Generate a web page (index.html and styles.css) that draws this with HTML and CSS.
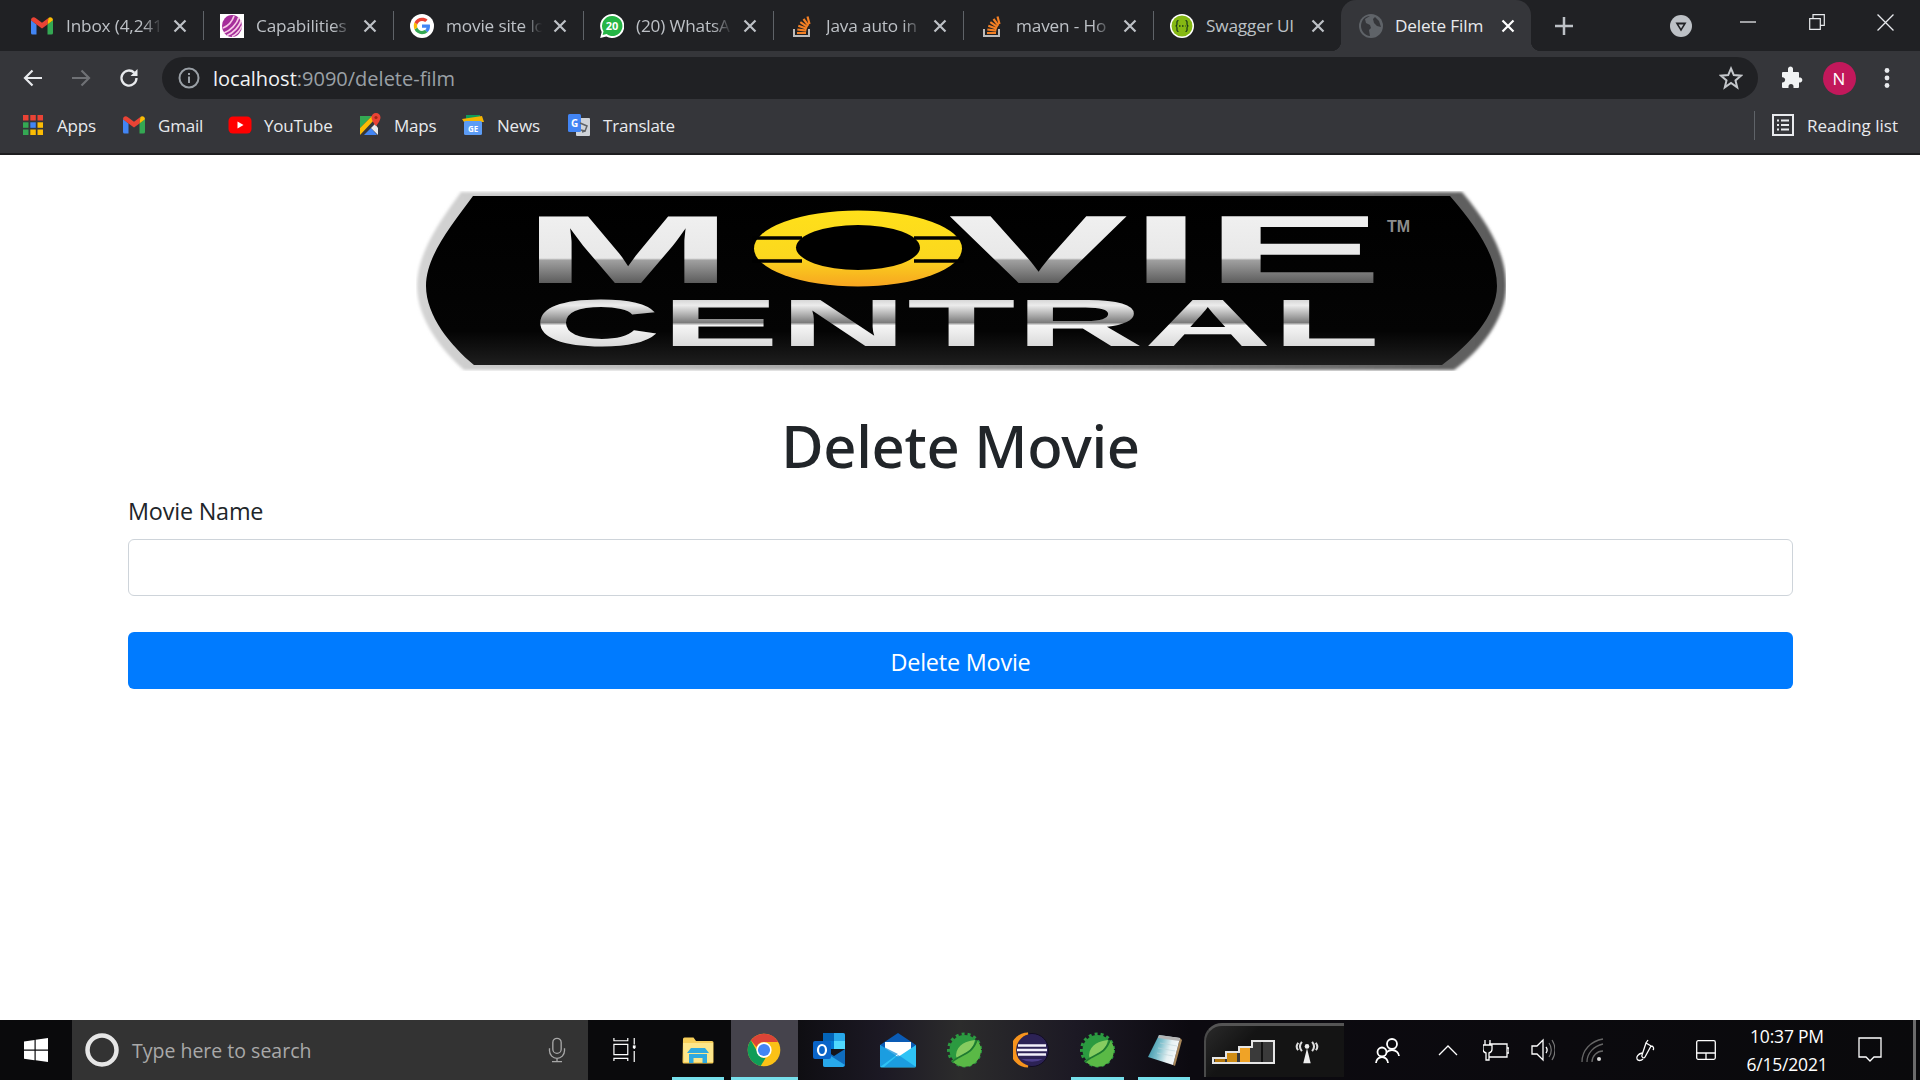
FILE: index.html
```html
<!DOCTYPE html>
<html lang="en">
<head>
<meta charset="utf-8">
<title>Delete Film</title>
<link rel="stylesheet" href="styles.css">
</head>
<body>
<svg class="defs" width="0" height="0" aria-hidden="true">
  <defs>
    <linearGradient id="padGrad" x1="0" y1="0" x2="1" y2="0.3">
      <stop offset="0" stop-color="#1f8299"/><stop offset=".45" stop-color="#7fc0cd"/><stop offset=".75" stop-color="#e6f1f3"/><stop offset="1" stop-color="#f6f9fa"/>
    </linearGradient>
    <symbol id="gmail" viewBox="0 0 24 24">
      <path fill="#4285F4" d="M1 6v13a1.600 1.600 0 0 0 1.600 1.600H6.500V10.500z"/>
      <path fill="#34A853" d="M23 6v13a1.600 1.600 0 0 1-1.600 1.600h-3.900V10.500z"/>
      <path fill="#EA4335" d="M1 6.200C1 3.800 3.700 2.500 5.600 4L12 8.800 18.400 4l-.9 6.500L12 14.600l-5.500-4.100L1 6.200z"/>
      <path fill="#FBBC04" d="M18.400 4C20.300 2.500 23 3.800 23 6.200l-5.500 4.300z"/>
    </symbol>
    <symbol id="capab" viewBox="0 0 24 24">
      <rect width="24" height="24" fill="#fff"/>
      <ellipse cx="12" cy="12" rx="10" ry="11" fill="#a52d9b"/>
      <path d="M4 19C10 17 17 10 19 3M7 21.500C13 19 20 12 21 6M3 14C8 12 12 8 14 2M12 22.500c4-2 8-6 10-11" stroke="#f7c9e6" stroke-width="1.700" fill="none"/>
    </symbol>
    <symbol id="google" viewBox="0 0 24 24">
      <circle cx="12" cy="12" r="12" fill="#fff"/>
      <path fill="#4285F4" d="M20 12.200c0-.6 0-1.100-.2-1.700H12v3.200h4.500c-.2 1-.8 1.900-1.700 2.500l2.700 2.100c1.600-1.500 2.500-3.600 2.500-6.100z"/>
      <path fill="#34A853" d="M12 20.200c2.200 0 4.100-.7 5.500-2l-2.700-2.100c-.7.5-1.700.8-2.800.8-2.200 0-4-1.500-4.700-3.400l-2.800 2.100c1.400 2.800 4.200 4.600 7.500 4.600z"/>
      <path fill="#FBBC04" d="M7.300 13.500c-.3-1-.3-2 0-3L4.500 8.300c-1 2.200-1 5 0 7.300z"/>
      <path fill="#EA4335" d="M12 6.900c1.200 0 2.300.4 3.200 1.200l2.400-2.400C16.100 4.400 14.200 3.800 12 3.800c-3.300 0-6.100 1.800-7.500 4.500l2.800 2.200C8 8.400 9.800 6.900 12 6.900z"/>
    </symbol>
    <symbol id="whatsapp" viewBox="0 0 24 24">
      <path fill="#fff" d="M12 0a12 12 0 0 0-10.300 18L.2 24l6.100-1.600A12 12 0 1 0 12 0z"/>
      <path fill="#25B545" d="M12 2a10 10 0 0 0-8.500 15.200l-.9 3.900 4-1A10 10 0 1 0 12 2z"/>
      <text x="12" y="16" class="wa-count">20</text>
    </symbol>
    <symbol id="so" viewBox="0 0 24 24">
      <path fill="none" stroke="#bcbbbb" stroke-width="2" d="M4 15v7h15v-7"/>
      <path stroke="#f48024" stroke-width="2.200" fill="none" d="M7 19h9M7.300 15.500l9 1.200M8.300 11.800l8.500 3M10.300 8.200l7.300 5M13.500 5l5 6.700M17.500 2.500l2 7.500"/>
    </symbol>
    <symbol id="swagger" viewBox="0 0 24 24">
      <circle cx="12" cy="12" r="12" fill="#fff"/>
      <circle cx="12" cy="12" r="10.500" fill="#85b813"/>
      <path fill="none" stroke="#17361a" stroke-width="1.200" d="M8.500 6.500c-2 0-1.500 2-1.500 3.500s-1 2-1.500 2c.5 0 1.500.5 1.500 2s-.5 3.500 1.500 3.500M15.500 6.500c2 0 1.500 2 1.500 3.500s1 2 1.500 2c-.5 0-1.500.5-1.500 2s.5 3.500-1.500 3.500"/>
      <path stroke="#17361a" stroke-width="1.600" stroke-dasharray="1.500 1.500" d="M9 12h6.500"/>
    </symbol>
    <symbol id="globe" viewBox="0 0 24 24">
      <circle cx="12" cy="12" r="12" fill="#5f6368"/>
      <path fill="#35363a" d="M11 2 6 5l1 4 4 2 1 3-2 2 1 6c-5-.5-9-5-9-10S5 2.500 11 2zM16 3l4 4 2 6-4-1-3-3-1-4z"/>
    </symbol>
    <symbol id="x" viewBox="0 0 14 14">
      <path d="M1.500 1.500l11 11M12.500 1.500l-11 11" stroke="currentColor" stroke-width="2.200" fill="none"/>
    </symbol>
    <symbol id="apps" viewBox="0 0 24 24">
      <g>
        <rect x="2" y="2" width="5.500" height="5.500" fill="#ea4335"/><rect x="9.300" y="2" width="5.500" height="5.500" fill="#ea4335"/><rect x="16.500" y="2" width="5.500" height="5.500" fill="#ea4335"/>
        <rect x="2" y="9.300" width="5.500" height="5.500" fill="#34a853"/><rect x="9.300" y="9.300" width="5.500" height="5.500" fill="#4285f4"/><rect x="16.500" y="9.300" width="5.500" height="5.500" fill="#fbbc04"/>
        <rect x="2" y="16.500" width="5.500" height="5.500" fill="#34a853"/><rect x="9.300" y="16.500" width="5.500" height="5.500" fill="#fbbc04"/><rect x="16.500" y="16.500" width="5.500" height="5.500" fill="#fbbc04"/>
      </g>
    </symbol>
    <symbol id="youtube" viewBox="0 0 24 24">
      <rect x="0.500" y="3.500" width="23" height="17" rx="4.500" fill="#f00"/>
      <path fill="#fff" d="M9.500 8.500v7l6-3.500z"/>
    </symbol>
    <symbol id="maps" viewBox="0 0 24 24">
      <path fill="#34a853" d="M2 3h12l-12 12z"/>
      <path fill="#fbbc04" d="M2 15 14 3l3 3L2 22z"/>
      <path fill="#4285f4" d="M6 22l7-7 6 7z"/>
      <path fill="#e8eaed" d="M13 15l4-4 3 4v7z"/>
      <path fill="#ea4335" d="M18 0a4.500 4.500 0 0 0-4.500 4.500C13.500 8 18 13 18 13s4.500-5 4.500-8.500A4.500 4.500 0 0 0 18 0z"/>
      <circle cx="18" cy="4.500" r="1.600" fill="#a52714"/>
    </symbol>
    <symbol id="news" viewBox="0 0 24 24">
      <path fill="#0f9d58" d="M5 2h14v6H5z"/>
      <path fill="#f4b400" d="M1 6l20-3 2 6H3z"/>
      <rect x="3" y="8" width="18" height="14" rx="1.500" fill="#5c9cf5"/>
      <text x="12" y="18.500" class="news-mark">GE</text>
    </symbol>
    <symbol id="translate" viewBox="0 0 24 24">
      <rect x="9" y="5" width="14" height="18" rx="1" fill="#cfd3d8"/>
      <rect x="1" y="1" width="13" height="18" rx="1.500" fill="#4285f4"/>
      <text x="7.500" y="14" class="tr-mark">G</text>
      <path d="M13 10l7 3-2 5-4-1M15 19l3-1" stroke="#5f6368" stroke-width="1.500" fill="none"/>
    </symbol>
    <symbol id="chrome" viewBox="0 0 24 24">
      <circle cx="12" cy="12" r="11.500" fill="#fbc116"/>
      <path fill="#db4437" d="M12 .5a11.500 11.500 0 0 1 10 5.800H12a5.700 5.700 0 0 0-5.300 3.500L2.700 5.200A11.500 11.500 0 0 1 12 .5z"/>
      <path fill="#0f9d58" d="M2.700 5.200l4.300 7.500a5.700 5.700 0 0 0 6.100 4.900l-3.400 5.700A11.500 11.500 0 0 1 2.700 5.200z"/>
      <circle cx="12" cy="12" r="5.400" fill="#fff"/>
      <circle cx="12" cy="12" r="4.300" fill="#4285f4"/>
    </symbol>
    <symbol id="spring" viewBox="0 0 36 36">
      <circle cx="18.500" cy="18" r="15" fill="#2b9a40"/>
      <circle cx="18.500" cy="18" r="16" fill="none" stroke="#2b9a40" stroke-width="3" stroke-dasharray="3 3"/>
      <path fill="#5ab946" d="M31 8A17 17 0 0 1 35 18 16.500 16.500 0 0 1 6 29C13 23 22 23 26 18 29 15 30 11 31 8z"/>
      <path fill="#86cc60" d="M29 8C21 9 11 12 10 23c0 2 1 4 2 4 7-7 14-6 17-19z"/>
      <path fill="none" stroke="#1f7a30" stroke-width="1.600" d="M6 30C14 22 26 23 31 8"/>
    </symbol>
  </defs>
</svg>

<header class="chrome">
  <div class="tabstrip">
    <div class="tab"><svg class="fav"><use href="#gmail"/></svg><span class="tab-title">Inbox (4,241</span><svg class="tab-x"><use href="#x"/></svg></div><i class="tab-sep"></i>
    <div class="tab"><svg class="fav"><use href="#capab"/></svg><span class="tab-title">Capabilities</span><svg class="tab-x"><use href="#x"/></svg></div><i class="tab-sep"></i>
    <div class="tab"><svg class="fav"><use href="#google"/></svg><span class="tab-title">movie site lo</span><svg class="tab-x"><use href="#x"/></svg></div><i class="tab-sep"></i>
    <div class="tab"><svg class="fav"><use href="#whatsapp"/></svg><span class="tab-title">(20) WhatsA</span><svg class="tab-x"><use href="#x"/></svg></div><i class="tab-sep"></i>
    <div class="tab"><svg class="fav"><use href="#so"/></svg><span class="tab-title">Java auto in</span><svg class="tab-x"><use href="#x"/></svg></div><i class="tab-sep"></i>
    <div class="tab"><svg class="fav"><use href="#so"/></svg><span class="tab-title">maven - Ho</span><svg class="tab-x"><use href="#x"/></svg></div><i class="tab-sep"></i>
    <div class="tab tab-last"><svg class="fav"><use href="#swagger"/></svg><span class="tab-title tab-nofade">Swagger UI</span><svg class="tab-x"><use href="#x"/></svg></div>
    <div class="tab tab-active"><svg class="fav"><use href="#globe"/></svg><span class="tab-title tab-nofade">Delete Film</span><svg class="tab-x"><use href="#x"/></svg></div>
    <svg class="newtab" viewBox="0 0 20 20"><path d="M10 1v18M1 10h18" stroke="#bdc1c6" stroke-width="2.500"/></svg>
    <svg class="tabsearch" viewBox="0 0 22 22"><circle cx="11" cy="11" r="11" fill="#bdc1c6"/><path d="M5.500 7.500h11L11 16.500z" fill="#202124"/><path d="M8.500 9.500h5L11 13.500z" fill="#bdc1c6"/></svg>
    <div class="winbtns">
      <div class="winbtn"><svg viewBox="0 0 16 16" width="16" height="16"><path d="M0 8h16" stroke="#e8eaed" stroke-width="1.300"/></svg></div>
      <div class="winbtn"><svg viewBox="0 0 16 16" width="16" height="18"><path d="M.7 4.700h10.600v10.600H.7zM4 4.700V.7h11.300v10.600h-4" fill="none" stroke="#e8eaed" stroke-width="1.200"/></svg></div>
      <div class="winbtn"><svg viewBox="0 0 16 16" width="17" height="17"><path d="M.5.500l15 15M15.500.500l-15 15" stroke="#e8eaed" stroke-width="1.200"/></svg></div>
    </div>
  </div>

  <div class="toolbar">
    <div class="tool"><svg viewBox="0 0 24 24" width="24" height="24"><path d="M21 12H4M11.500 4.500 4 12l7.500 7.500" fill="none" stroke="#e8eaed" stroke-width="2.200"/></svg></div>
    <div class="tool"><svg viewBox="0 0 24 24" width="24" height="24"><path d="M3 12h17M12.500 4.500 20 12l-7.500 7.500" fill="none" stroke="#6f7175" stroke-width="2.200"/></svg></div>
    <div class="tool"><svg viewBox="0 0 24 24" width="24" height="24"><path d="M19.500 12a7.500 7.500 0 1 1-2.300-5.400" fill="none" stroke="#e8eaed" stroke-width="2.300"/><path d="M20.500 3v7h-7z" fill="#e8eaed"/></svg></div>
    <div class="omnibox">
      <svg class="info" viewBox="0 0 24 24" width="24" height="24"><circle cx="12" cy="12" r="9.500" fill="none" stroke="#9aa0a6" stroke-width="2"/><path d="M12 10.500V17M12 7v2" stroke="#9aa0a6" stroke-width="2"/></svg>
      <div class="url"><span class="url-host">localhost</span>:9090/delete-film</div>
      <svg class="star" viewBox="0 0 24 24" width="24" height="24"><path d="M12 2.500l2.800 6.600 7.200.6-5.500 4.700 1.700 7L12 17l-6.200 4.400 1.700-7L2 9.700l7.200-.6z" fill="none" stroke="#c4c7cb" stroke-width="2"/></svg>
    </div>
    <div class="tool tool-first"><svg viewBox="0 0 24 24" width="24" height="24"><path fill="#f1f3f4" d="M9 2.500a2.600 2.600 0 0 1 5 0V6h5a1 1 0 0 1 1 1v4.500h1.500a2.600 2.600 0 0 1 0 5H20V21a1 1 0 0 1-1 1h-4.500v-1.500a2.500 2.500 0 0 0-5 0V22H4a1 1 0 0 1-1-1v-4.500h1a2.700 2.700 0 0 0 0-5.300H3V7a1 1 0 0 1 1-1h5z"/></svg></div>
    <div class="tool"><span class="avatar">N</span></div>
    <div class="tool"><svg viewBox="0 0 24 24" width="24" height="24"><circle cx="12" cy="4.500" r="2.400" fill="#e8eaed"/><circle cx="12" cy="12" r="2.400" fill="#e8eaed"/><circle cx="12" cy="19.500" r="2.400" fill="#e8eaed"/></svg></div>
  </div>

  <nav class="bookmarks">
    <div class="bm-list">
      <a class="bm"><svg class="fav"><use href="#apps"/></svg>Apps</a>
      <a class="bm"><svg class="fav"><use href="#gmail"/></svg>Gmail</a>
      <a class="bm"><svg class="fav"><use href="#youtube"/></svg>YouTube</a>
      <a class="bm"><svg class="fav"><use href="#maps"/></svg>Maps</a>
      <a class="bm"><svg class="fav"><use href="#news"/></svg>News</a>
      <a class="bm"><svg class="fav"><use href="#translate"/></svg>Translate</a>
    </div>
    <div class="reading">
      <i class="reading-sep"></i>
      <svg class="fav" viewBox="0 0 24 24"><rect x="2" y="2" width="20" height="20" fill="none" stroke="#e8eaed" stroke-width="2"/><path d="M6 7.500h2M6 12h2M6 16.500h2M10 7.500h8M10 12h8M10 16.500h8" stroke="#e8eaed" stroke-width="2"/></svg>
      <span>Reading list</span>
    </div>
  </nav>
</header>

<main class="page">
  <svg class="logo" viewBox="0 0 1090 180" width="1090" height="180" role="img" aria-label="Movie Central">
    <defs>
      <linearGradient id="lgMovie" gradientUnits="userSpaceOnUse" x1="0" y1="23" x2="0" y2="92">
        <stop offset="0" stop-color="#f0f0f0"/><stop offset=".64" stop-color="#e8e8e8"/><stop offset=".67" stop-color="#a0a0a0"/><stop offset="1" stop-color="#5c5c5c"/>
      </linearGradient>
      <linearGradient id="lgCentral" gradientUnits="userSpaceOnUse" x1="0" y1="107" x2="0" y2="156">
        <stop offset="0" stop-color="#cfcfcf"/><stop offset=".15" stop-color="#ececec"/><stop offset=".5" stop-color="#7c7c7c"/><stop offset=".56" stop-color="#f6f6f6"/><stop offset="1" stop-color="#d8d8d8"/>
      </linearGradient>
      <linearGradient id="lgRing" x1="0" y1="0" x2="0" y2="1">
        <stop offset="0" stop-color="#ffe01a"/><stop offset=".6" stop-color="#fbd81e"/><stop offset="1" stop-color="#f7a520"/>
      </linearGradient>
      <linearGradient id="lgEdge" x1="0" y1="0" x2="1" y2="0">
        <stop offset="0" stop-color="#d4d4d4"/><stop offset=".6" stop-color="#8a8a8a"/><stop offset="1" stop-color="#5a5a5a"/>
      </linearGradient>
      <linearGradient id="lgPlate" x1="0" y1="0" x2="0" y2="1">
        <stop offset="0" stop-color="#000"/><stop offset=".8" stop-color="#040404"/><stop offset="1" stop-color="#1e1e1e"/>
      </linearGradient>
      <filter id="soft" x="-2%" y="-5%" width="104%" height="110%"><feGaussianBlur stdDeviation="1.500"/></filter>
    </defs>
    <path d="M45 1H1046C1072 32 1090 62 1090 95C1090 128 1064 160 1038 179H48C26 160 1 128 1 95C1 62 24 30 45 1Z" fill="url(#lgEdge)" filter="url(#soft)"/>
    <path d="M57 5H1034C1060 35 1081 65 1081 95C1081 125 1052 155 1026 174H58C35 155 10 125 10 95C10 65 35 35 57 5Z" fill="url(#lgPlate)"/>
    <text class="logo-a" x="106" y="92" textLength="212" lengthAdjust="spacingAndGlyphs" fill="url(#lgMovie)">M</text>
    <text class="logo-a" x="532" y="92" textLength="436" lengthAdjust="spacingAndGlyphs" fill="url(#lgMovie)">VIE</text>
    <ellipse cx="442" cy="57.500" rx="104" ry="38" fill="url(#lgRing)"/>
    <ellipse cx="442" cy="56.500" rx="62" ry="22.500" fill="#000"/>
    <path d="M336 47h50M498 47h50M336 70h50M498 70h50" stroke="#000" stroke-width="3.500"/>
    <text class="logo-tm" x="971" y="41" fill="#8c8c8c">TM</text>
    <text class="logo-b" x="117" y="155" textLength="847" lengthAdjust="spacingAndGlyphs" fill="url(#lgCentral)">CENTRAL</text>
  </svg>
  <h1 class="title">Delete Movie</h1>
  <form class="form">
    <label class="label" for="movie">Movie Name</label>
    <input class="input" id="movie" type="text">
    <button class="btn" type="button">Delete Movie</button>
  </form>
</main>

<footer class="taskbar">
  <div class="start"><svg viewBox="0 0 24 24" width="24" height="24"><path fill="#fff" d="M0 3.500 10.500 2v9.500H0zM11.700 1.800 24 0v11.500H11.700zM0 12.700h10.500v9.500L0 20.700zM11.700 12.700H24V24l-12.300-1.800z"/></svg></div>
  <div class="search">
    <svg viewBox="0 0 36 36" width="36" height="36"><circle cx="18" cy="18" r="14.500" fill="none" stroke="#e6e6e6" stroke-width="4.500"/></svg>
    <span class="search-text">Type here to search</span>
    <svg class="mic" viewBox="0 0 24 30" width="20" height="26"><rect x="7" y="1" width="10" height="18" rx="5" fill="none" stroke="#a8a8a8" stroke-width="1.600"/><path d="M3 13v3a9 9 0 0 0 18 0v-3M12 25v4M6 29h12" fill="none" stroke="#a8a8a8" stroke-width="1.600"/></svg>
  </div>
  <div class="tb tb-view"><svg viewBox="0 0 26 26" width="24" height="26"><path d="M1 0v3h15V0M1 7h15v11H1zM1 25v-3h15v3M23 0v7M23 10.500v1.500M23 14v12" fill="none" stroke="#fff" stroke-width="1.300"/><rect x="21.500" y="8" width="3" height="3" fill="#fff"/></svg></div>
  <div class="tb tb-run tb-gap">
    <svg viewBox="0 0 32 32" width="32" height="32"><path fill="#f7cf5a" d="M1 5a1.500 1.500 0 0 1 1.500-1.500h9L14 7h16a1.500 1.500 0 0 1 1.500 1.500V28a1.500 1.500 0 0 1-1.500 1.500H2A1.500 1.500 0 0 1 .5 28z"/><path fill="#fde68a" d="M1 9h30v19H2z"/><path fill="#2fa9df" d="M7 20h18v9h-4.500v-5h-9v5H7zM5 19l4-5h14l4 5z"/></svg>
  </div>
  <div class="tb tb-active"><svg width="34" height="34"><use href="#chrome"/></svg></div>
  <div class="tb">
    <svg viewBox="0 0 36 36" width="36" height="36"><path fill="#0364b8" d="M10 1h20a2 2 0 0 1 2 2v13H10z"/><path fill="#28a8ea" d="M21 1h9a2 2 0 0 1 2 2v7H21z"/><path fill="#0078d4" d="M10 9h11v8H10z"/><path fill="#50d9ff" d="M21 9h11v8H21z"/><path fill="#0f6cbd" d="M10 17l11 7 11-7v16a2 2 0 0 1-2 2H12a2 2 0 0 1-2-2z"/><path fill="#28a8ea" d="M10 19l22 14-2 2H12a2 2 0 0 1-2-2z"/><rect x="0" y="9" width="18" height="18" rx="2" fill="#0a64c8"/><ellipse cx="9" cy="18" rx="4" ry="5" fill="none" stroke="#fff" stroke-width="2.200"/></svg>
  </div>
  <div class="tb">
    <svg viewBox="0 0 36 36" width="36" height="36"><path fill="#0a5bb5" d="M18 1 0 13v5h36v-5z"/><path fill="#fff" d="M5 10h26v9L18 26 5 19z"/><path fill="#2ec3f5" d="M0 13l18 12 18-12v21a1.500 1.500 0 0 1-1.500 1.500h-33A1.500 1.500 0 0 1 0 34z"/><path fill="#1590d8" d="M0 35 18 22 0 13zM36 35H4l14-12 2 1z" opacity=".75"/></svg>
  </div>
  <div class="tb"><svg width="36" height="36" viewBox="0 0 36 36"><use href="#spring"/></svg></div>
  <div class="tb">
    <svg viewBox="0 0 36 36" width="36" height="36"><circle cx="19" cy="18" r="16.500" fill="#2c2255" stroke="#120d22" stroke-width="1"/><path d="M15 1.500a16.500 16.500 0 0 0 0 33A17 17 0 0 1 15 1.500z" fill="#f7941e" stroke="#f7941e" stroke-width="2"/><path d="M5 13.500h28M4 18h30M5 22.500h28" stroke="#f2f0fa" stroke-width="2.400"/><path d="M8 27a16 10 0 0 0 22 0z" fill="#4d3f8a"/></svg>
  </div>
  <div class="tb tb-run"><svg width="36" height="36" viewBox="0 0 36 36"><use href="#spring"/></svg></div>
  <div class="tb tb-run">
    <svg viewBox="0 0 36 36" width="36" height="36"><path fill="#a8875a" d="M34 6l2 2-7 26-2-1z"/><path fill="url(#padGrad)" d="M13 3l21 3-7 27L2 25z"/><path fill="#b5b5b5" d="M13 3l21 3-.8 3L12 6z"/><path d="M14 11l17 3M12 16l17 3M11 21l16 3" stroke="#bcd3d9" stroke-width="1" fill="none" opacity=".6"/></svg>
  </div>
  <div class="thumb">
    <svg viewBox="0 0 64 24" width="64" height="24"><path d="M1 18h13v-6h13V7h13V1h22v22H1z" fill="#3a3a3a" stroke="#e6e6e6" stroke-width="2"/><path fill="#b5790f" d="M3 19h10v3H3z"/><path fill="#d08d15" d="M15 13h10v9H15z"/><path fill="#f0a326" d="M28 8h10v14H28z"/><path stroke="#111" stroke-width="2" d="M50 2v20"/></svg>
    <svg viewBox="0 0 28 28" width="26" height="26"><path d="M14 10l-4 16h8z" fill="#eee"/><circle cx="14" cy="8" r="2.500" fill="#eee"/><path d="M8.500 3C6 6 6 10 8.500 13M19.500 3c2.500 3 2.500 7 0 10M4.500 4c-2 3-2 6 0 8M23.500 4c2 3 2 6 0 8" fill="none" stroke="#ddd" stroke-width="2.200"/></svg>
  </div>
  <div class="tray">
    <div class="ti"><svg viewBox="0 0 28 28" width="28" height="28"><circle cx="18" cy="8" r="5" fill="none" stroke="#fff" stroke-width="1.800"/><path d="M11 20c0-3 3-6 7-6s7 3 7 6" fill="none" stroke="#fff" stroke-width="1.800"/><circle cx="8" cy="16" r="4.500" fill="#0b0b0d" stroke="#fff" stroke-width="1.800"/><path d="M2 27c0-3 2.500-6 6-6s6 3 6 6" fill="#0b0b0d" stroke="#fff" stroke-width="1.800"/></svg></div>
    <div class="ti"><svg viewBox="0 0 20 12" width="20" height="12"><path d="M1 11 10 2l9 9" fill="none" stroke="#fff" stroke-width="1.300"/></svg></div>
    <div class="ti"><svg viewBox="0 0 26 22" width="26" height="22"><path d="M6 5h18v13H6M24 9h2v5h-2" fill="none" stroke="#fff" stroke-width="1.300"/><path d="M2 1v5M7 1v5M0 6h9v4a4 4 0 0 1-3 4v7H3v-7a4 4 0 0 1-3-4z" fill="#0b0b0d" stroke="#fff" stroke-width="1.300"/></svg></div>
    <div class="ti"><svg viewBox="0 0 24 24" width="24" height="24"><path d="M1 8h5l6-6v20l-6-6H1z" fill="none" stroke="#fff" stroke-width="1.300"/><path d="M15 9a5 5 0 0 1 0 6" fill="none" stroke="#fff" stroke-width="1.300"/><path d="M18 5c3 4 3 10 0 14M21 2c4 6 4 14 0 20" fill="none" stroke="#777" stroke-width="1.200"/></svg></div>
    <div class="ti"><svg viewBox="0 0 24 24" width="24" height="24"><path d="M1 24C1 12 10 3 22 1M6 24C6 15 13 8 22 6M11 24c0-6 5-11 11-11" fill="none" stroke="#666" stroke-width="1.300"/><circle cx="18" cy="21" r="2" fill="#ddd"/></svg></div>
    <div class="ti"><svg viewBox="0 0 24 24" width="24" height="24"><path d="M13 5l5 3-6 11c-1 2-4 0-3-2zM15 2l-2 3M18 8c3 0 3 3 2 4M9 15c-4 1-6 4-5 6s4 2 6 0" fill="none" stroke="#fff" stroke-width="1.300"/></svg></div>
    <div class="ti"><svg viewBox="0 0 20 20" width="20" height="20"><rect x=".7" y=".7" width="18.600" height="18.600" rx="1.500" fill="none" stroke="#fff" stroke-width="1.300"/><path d="M.7 13h18.600M10 13v6" stroke="#fff" stroke-width="1.300"/></svg></div>
    <div class="clock"><div>10:37 PM</div><div>6/15/2021</div></div>
    <div class="ti"><svg viewBox="0 0 24 26" width="24" height="26"><path d="M1 1h22v19h-7l-4 4-4-4H1z" fill="none" stroke="#fff" stroke-width="1.300"/></svg></div>
  </div>
  <i class="peek"></i>
</footer>
</body>
</html>
```
FILE: styles.css
```css
* { box-sizing: border-box; }
html, body { margin: 0; height: 100%; }
body {
  width: 1920px;
  height: 1080px;
  overflow: hidden;
  display: flex;
  flex-direction: column;
  background: #fff;
  font-family: "Open Sans", "Noto Sans", sans-serif;
  color: #212529;
}
.defs { position: absolute; }
.wa-count { font: 700 11px "Open Sans", sans-serif; fill: #fff; text-anchor: middle; }
.news-mark { font: 700 8px "Open Sans", sans-serif; fill: #fff; text-anchor: middle; }
.tr-mark { font: 700 10px "Open Sans", sans-serif; fill: #fff; text-anchor: middle; }

/* browser frame */
.chrome { flex: none; background: #35363a; color: #e8eaed; }
.tabstrip {
  height: 51px;
  background: #202124;
  display: flex;
  align-items: center;
  padding-left: 14px;
}
.tab {
  flex: none;
  width: 188.5px;
  height: 51px;
  display: flex;
  align-items: center;
  padding: 0 14px 0 16px;
  color: #bdc1c6;
  font-size: 17.2px;
  letter-spacing: -0.15px;
}
.tab-last { width: 187px; }
.tab-active {
  position: relative;
  width: 190px;
  padding-left: 18px;
  padding-right: 14px;
  background: #35363a;
  border-radius: 15px 15px 0 0;
  color: #e8eaed;
}
.tab-active::before, .tab-active::after {
  content: "";
  position: absolute;
  bottom: 0;
  width: 10px;
  height: 10px;
}
.tab-active::before { left: -10px; background: radial-gradient(circle at 0 0, #202124 10px, #35363a 10.5px); }
.tab-active::after { right: -10px; background: radial-gradient(circle at 100% 0, #202124 10px, #35363a 10.5px); }
.fav { flex: none; width: 24px; height: 24px; }
.tab-title {
  flex: 1;
  min-width: 0;
  margin-left: 12px;
  white-space: nowrap;
  -webkit-mask-image: linear-gradient(90deg, #000 72%, transparent 90%);
  mask-image: linear-gradient(90deg, #000 72%, transparent 90%);
}
.tab-nofade { -webkit-mask-image: none; mask-image: none; }
.tab-x { flex: none; width: 14px; height: 14px; margin-right: 2px; color: #bdc1c6; }
.tab-active .tab-x { color: #fff; }
.tab-sep { flex: none; width: 1.5px; height: 29px; background: #5f6368; }
.newtab { flex: none; width: 20px; height: 20px; margin-left: 23px; }
.tabsearch { flex: none; width: 22px; height: 22px; margin-left: auto; margin-right: 21px; }
.winbtns { flex: none; display: flex; align-self: flex-start; }
.winbtn { width: 69px; height: 44px; display: flex; align-items: center; justify-content: center; }

.toolbar {
  height: 54px;
  padding: 6px 9px;
  display: flex;
  align-items: center;
}
.tool { flex: none; width: 48px; height: 42px; display: flex; align-items: center; justify-content: center; }
.tool-first { margin-left: 9px; }
.omnibox {
  flex: 1;
  height: 42px;
  margin-left: 9px;
  padding: 0 15px;
  border-radius: 21px;
  background: #202124;
  display: flex;
  align-items: center;
}
.url { flex: 1; margin-left: 12px; font-size: 20px; letter-spacing: 0; color: #9aa0a6; }
.url-host { color: #f1f3f4; }
.avatar {
  width: 33px;
  height: 33px;
  border-radius: 50%;
  background: #c2185b;
  color: #fff;
  font-size: 17px;
  display: flex;
  align-items: center;
  justify-content: center;
}

.bookmarks {
  height: 50px;
  border-bottom: 2px solid #1d1d1f;
  padding: 0 0 8px 21px;
  display: flex;
  align-items: center;
  font-size: 17px;
  letter-spacing: -0.2px;
}
.bm-list { display: grid; grid-template-columns: 101px 106px 130px 103px 106px auto; }
.bm { display: flex; align-items: center; gap: 12px; color: #e8eaed; white-space: nowrap; }
.reading { margin-left: auto; display: flex; align-items: center; padding-right: 22px; color: #e8eaed; letter-spacing: 0; }
.reading-sep { width: 1.5px; height: 29px; background: #5f6368; margin-right: 16px; }
.reading span { margin-left: 12px; }

/* page */
.page {
  flex: 1;
  min-height: 0;
  padding: 36px 127px 0 128px;
  display: flex;
  flex-direction: column;
  align-items: stretch;
}
.logo { flex: none; display: block; align-self: center; }
.logo-a { font: 700 97px "Liberation Sans", sans-serif; }
.logo-b { font: 700 66px "Liberation Sans", sans-serif; }
.logo-tm { font: 700 16px "Liberation Sans", sans-serif; }
.title {
  margin: 39px 0 0;
  text-align: center;
  font-family: "Noto Sans", "Open Sans", sans-serif;
  font-size: 58px;
  line-height: 72px;
  font-weight: 500;
  letter-spacing: -0.3px;
  color: #212529;
}
.form { display: flex; flex-direction: column; }
.label { margin-top: 11px; font-size: 23.4px; line-height: 36px; letter-spacing: -0.2px; color: #212529; }
.input {
  margin-top: 10px;
  height: 57px;
  border: 1.5px solid #ced4da;
  border-radius: 6px;
  background: #fff;
}
.btn {
  margin-top: 36px;
  height: 57px;
  padding-top: 3px;
  border: 0;
  border-radius: 6px;
  background: #007bff;
  color: #fff;
  font-family: inherit;
  font-size: 23.4px;
  letter-spacing: -0.2px;
}

/* taskbar */
.taskbar {
  flex: none;
  height: 60px;
  display: flex;
  align-items: stretch;
  background: linear-gradient(90deg, #0a0a0c 0, #0a0a0c 40%, #1c1924 46%, #2c2c2c 50%, #1c1924 56%, #0c0a10 62%, #0a0a0c 100%);
  color: #fff;
}
.start { flex: none; width: 72px; display: flex; align-items: center; justify-content: center; background: #0a0a0c; }
.search {
  flex: none;
  width: 516px;
  background: #333;
  padding: 0 21px 0 12px;
  display: flex;
  align-items: center;
}
.search-text { flex: 1; margin-left: 12px; font-size: 19.5px; color: #a9a9a9; }
.mic { flex: none; }
.tb {
  flex: none;
  width: 66.6px;
  display: flex;
  align-items: center;
  justify-content: center;
  position: relative;
}
.tb-view { margin-left: 4px; }
.tb-gap { margin-left: 6px; }
.tb-run::after {
  content: "";
  position: absolute;
  left: 7px;
  right: 7px;
  bottom: 0;
  height: 3px;
  background: #76dfeb;
}
.tb-active { background: #45434c; box-shadow: inset 0 -3px 0 #76dfeb; }
.thumb {
  flex: none;
  width: 140px;
  margin: 3px 0 3px 7px;
  padding: 0 24px 0 6px;
  display: flex;
  align-items: center;
  justify-content: space-between;
  border-top: 3px solid #555;
  border-left: 2px solid #4a4a4a;
  border-top-left-radius: 18px;
  background: linear-gradient(135deg, #2a2a2a, #141414 30%);
}
.tray {
  flex: none;
  margin-left: auto;
  display: grid;
  grid-template-columns: 60px 60px 36px 58px 42px 62px 60px 102px 64px;
  align-items: center;
  justify-items: center;
}
.ti { display: flex; align-items: center; justify-content: center; }
.clock { font-size: 17.5px; line-height: 28px; text-align: center; white-space: nowrap; letter-spacing: -0.2px; }
.peek { flex: none; width: 3px; margin: 0 4px 0 11px; background: #6b6b6b; }
```
